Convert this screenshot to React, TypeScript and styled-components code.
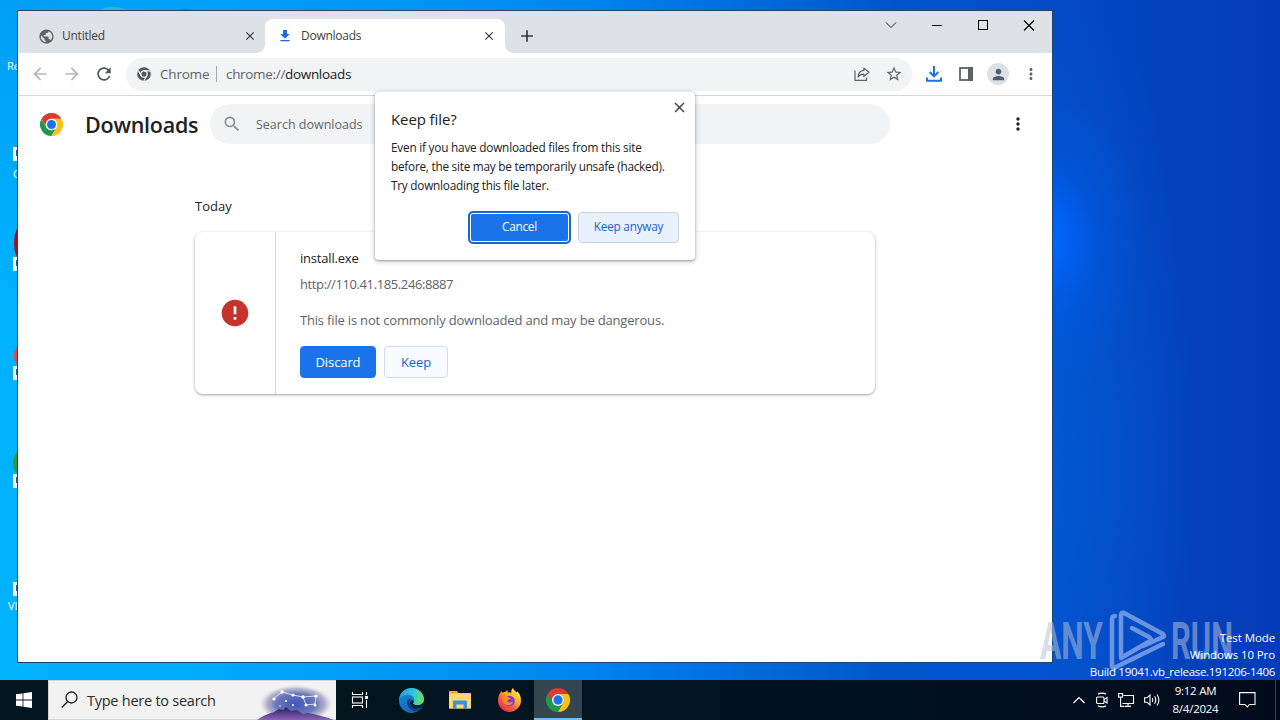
import styled, { createGlobalStyle } from "styled-components";

const GlobalStyle = createGlobalStyle`
  * {
    box-sizing: border-box;
  }
  body {
    margin: 0;
    overflow: hidden;
    font-family: "Open Sans", "Noto Sans", sans-serif;
  }
  button {
    font-family: inherit;
    padding: 0;
    border: none;
    background: none;
  }
  svg {
    display: block;
    flex: none;
    overflow: visible;
  }
`;

type IconProps = { d: string; size: number; color?: string };

const Icon = ({ d, size, color = "#5f6368" }: IconProps) => (
  <svg width={size} height={size} viewBox="0 0 24 24" fill={color}>
    <path d={d} />
  </svg>
);

const paths = {
  globe:
    "M12 2C6.48 2 2 6.48 2 12s4.48 10 10 10 10-4.48 10-10S17.52 2 12 2zm-1 17.93c-3.95-.49-7-3.85-7-7.93 0-.62.08-1.21.21-1.79L9 15v1c0 1.1.9 2 2 2v1.93zm6.9-2.54c-.26-.81-1-1.39-1.9-1.39h-1v-3c0-.55-.45-1-1-1H8v-2h2c.55 0 1-.45 1-1V7h2c1.1 0 2-.9 2-2v-.41c2.93 1.19 5 4.06 5 7.41 0 2.08-.8 3.97-2.1 5.39z",
  close:
    "M19 6.41L17.59 5 12 10.59 6.41 5 5 6.41 10.59 12 5 17.59 6.41 19 12 13.41 17.59 19 19 17.59 13.41 12z",
  download: "M19 9h-4V3H9v6H5l7 7 7-7zM5 18v2h14v-2H5z",
  add: "M19 13h-6v6h-2v-6H5v-2h6V5h2v6h6v2z",
  back: "M20 11H7.83l5.59-5.59L12 4l-8 8 8 8 1.41-1.41L7.83 13H20v-2z",
  forward: "M12 4l-1.41 1.41L16.17 11H4v2h12.17l-5.58 5.59L12 20l8-8z",
  reload:
    "M17.65 6.35A7.958 7.958 0 0 0 12 4c-4.42 0-7.99 3.58-7.99 8s3.57 8 7.99 8c3.73 0 6.84-2.55 7.73-6h-2.08A5.99 5.99 0 0 1 12 18c-3.31 0-6-2.69-6-6s2.69-6 6-6c1.66 0 3.14.69 4.22 1.78L13 11h7V4l-2.35 2.35z",
  star: "M22 9.24l-7.19-.62L12 2 9.19 8.63 2 9.24l5.46 4.73L5.82 21 12 17.27 18.18 21l-1.63-7.03L22 9.24zM12 15.4l-3.76 2.27 1-4.28-3.32-2.88 4.38-.38L12 6.1l1.71 4.04 4.38.38-3.32 2.88 1 4.28L12 15.4z",
  dots: "M12 8c1.1 0 2-.9 2-2s-.9-2-2-2-2 .9-2 2 .9 2 2 2zm0 2c-1.1 0-2 .9-2 2s.9 2 2 2 2-.9 2-2-.9-2-2-2zm0 6c-1.1 0-2 .9-2 2s.9 2 2 2 2-.9 2-2-.9-2-2-2z",
  person:
    "M12 12c2.21 0 4-1.79 4-4s-1.79-4-4-4-4 1.79-4 4 1.79 4 4 4zm0 2c-2.67 0-8 1.34-8 4v2h16v-2c0-2.66-5.33-4-8-4z",
  search:
    "M15.5 14h-.79l-.28-.27A6.471 6.471 0 0 0 16 9.5 6.5 6.5 0 1 0 9.5 16c1.61 0 3.09-.59 4.23-1.57l.27.28v.79l5 4.99L20.49 19l-4.99-5zm-6 0C7.01 14 5 11.99 5 9.5S7.01 5 9.5 5 14 7.01 14 9.5 11.99 14 9.5 14z",
  error:
    "M12 2C6.48 2 2 6.48 2 12s4.48 10 10 10 10-4.48 10-10S17.52 2 12 2zm1 15h-2v-2h2v2zm0-4h-2V7h2v6z",
};

const ChromeLogo = ({ size }: { size: number }) => (
  <svg width={size} height={size} viewBox="0 0 48 48">
    <path
      fill="#1e9a4c"
      d="M24 48A24 24 0 0 1 3.215 12L13.608 30A12 12 0 0 0 34.392 30L24 48z"
    />
    <path
      fill="#fbc116"
      d="M24 12H44.785A24 24 0 0 1 24 48L34.392 30A12 12 0 0 0 24 12z"
    />
    <path
      fill="#df3a2e"
      d="M13.608 30L3.215 12A24 24 0 0 1 44.785 12H24A12 12 0 0 0 13.608 30z"
    />
    <circle cx="24" cy="24" r="12" fill="#fff" />
    <circle cx="24" cy="24" r="9.3" fill="#1a73e8" />
  </svg>
);

const ChromeMono = () => (
  <svg width="14" height="14" viewBox="0 0 48 48">
    <circle cx="24" cy="24" r="23.500" fill="#55595e" />
    <circle cx="24" cy="24" r="11" fill="none" stroke="#f1f3f4" strokeWidth="4.5" />
    <path
      d="M24 13H45M14.5 30L4.5 12.500M33.500 30L23.500 47"
      stroke="#f1f3f4"
      strokeWidth="4"
    />
  </svg>
);

const ShareIcon = () => (
  <svg width="16" height="16" viewBox="0 0 16 16" fill="none" stroke="#5f6368" strokeWidth="1.2">
    <path d="M1 4.500V14.400H12.500V11.500" />
    <path
      d="M9.800 2L15 6.300L9.800 10.500V8.200C7 8.200 5.300 9 4 11C4.300 7.500 6.300 4.800 9.800 4.400V2z"
      strokeLinejoin="round"
    />
  </svg>
);

const TrayDownloadIcon = () => (
  <svg width="16" height="16" viewBox="0 0 16 16" fill="none" stroke="#1a73e8" strokeWidth="2">
    <path d="M8 0V10M3.700 6L8 10.300L12.300 6" />
    <path d="M1 11.500V14.800H15V11.500" />
  </svg>
);

const SidePanelIcon = () => (
  <svg width="14" height="14" viewBox="0 0 14 14">
    <rect x="1" y="1" width="12" height="12" fill="none" stroke="#5f6368" strokeWidth="1.8" />
    <rect x="9" y="0" width="5" height="14" fill="#5f6368" />
  </svg>
);

const WindowsLogo = () => (
  <svg width="16" height="16" viewBox="0 0 16 16" fill="#fff">
    <path d="M0 2.300L6.600 1.400V7.600H0zM7.400 1.300L16 0V7.600H7.400zM0 8.400H6.600V14.600L0 13.700zM7.400 8.400H16V16L7.400 14.800z" />
  </svg>
);

const SearchHighlight = () => (
  <svg width="80" height="39" viewBox="0 0 80 39">
    <defs>
      <radialGradient id="sky" cx="0.5" cy="0.55" r="0.5">
        <stop offset="0" stopColor="#3f58b8" />
        <stop offset="0.55" stopColor="#6a78b8" />
        <stop offset="0.8" stopColor="#a9a6c8" stopOpacity="0.8" />
        <stop offset="1" stopColor="#d8d4e2" stopOpacity="0" />
      </radialGradient>
      <linearGradient id="hill" x1="0" y1="0" x2="0" y2="1">
        <stop offset="0" stopColor="#2a1c5e" />
        <stop offset="1" stopColor="#8a63b8" />
      </linearGradient>
    </defs>
    <ellipse cx="40" cy="21" rx="37" ry="19" fill="url(#sky)" />
    <path d="M1 39C10 33 15 32 18 31L23 28L27 29L30 26L35 30L41 29L47 33L52 32C62 34 71 36 78 39z" fill="url(#hill)" />
    <path d="M17 18L26 11L37 14L47 16L60 15L59 23L50 24L47 16" fill="none" stroke="#dfe6ff" strokeWidth="0.9" />
    <g fill="#fff">
      <circle cx="18" cy="18" r="1.600" />
      <circle cx="26" cy="11" r="1.700" />
      <circle cx="37" cy="14" r="1.600" />
      <circle cx="47" cy="16" r="1.700" />
      <circle cx="60" cy="15" r="1.600" />
      <circle cx="59" cy="24" r="1.500" />
      <circle cx="50" cy="24" r="1.500" />
      <circle cx="30" cy="20" r="1" />
      <circle cx="37" cy="24" r="1" />
      <circle cx="24" cy="25" r="0.700" />
    </g>
  </svg>
);

const TaskViewIcon = () => (
  <svg width="18" height="16" viewBox="0 0 18 16" fill="none" stroke="#fff" strokeWidth="1.100">
    <path d="M1.500 0V2.500H11.500V0M1.500 16V13.500H11.500V16" />
    <rect x="1.500" y="5" width="10" height="6" />
    <path d="M15.500 0V3M15.500 8V16" />
    <rect x="14.500" y="4.500" width="2" height="2" fill="#fff" />
  </svg>
);

const EdgeIcon = () => (
  <svg width="25" height="25" viewBox="0 0 24 24">
    <defs>
      <linearGradient id="edgeTop" x1="0" y1="0.3" x2="1" y2="0.5">
        <stop offset="0" stopColor="#1f9be8" />
        <stop offset="0.55" stopColor="#35c4d6" />
        <stop offset="1" stopColor="#64df62" />
      </linearGradient>
      <linearGradient id="edgeLow" x1="0" y1="0" x2="0.6" y2="1">
        <stop offset="0" stopColor="#1b8ddb" />
        <stop offset="1" stopColor="#1463b8" />
      </linearGradient>
    </defs>
    <circle cx="12" cy="12" r="12" fill="url(#edgeLow)" />
    <path
      d="M0.100 11C0.700 4.800 5.800 0 12 0c7 0 12 5.300 12 10.500 0 3.700-2.900 6.100-6.200 6.100-2.800 0-4.300-1.100-4.300-1.900 0-.7 1.200-1.300 1.200-3C14.700 9 12 6.500 8.500 6.500 4 6.500 1 9 .1 11z"
      fill="url(#edgeTop)"
    />
    <path
      d="M11.500 10.500c-1.200.8-1.800 2.200-1.500 4 .6 3.200 4 5.300 7.500 5 2.400-.2 4.200-1.100 5.200-1.800-.4.900-.9 1.700-1.500 2.400-2.500 2.400-6 2.700-8.700 1.200C8 19 7 14 8.500 11.500c.8-1 2-1.300 3-1z"
      fill="#123f78"
    />
    <path d="M13.500 14.700c0 .8 1.500 1.900 4.300 1.900 2.400 0 4.700-1.200 5.600-3.200l.5 1.500-1.200 2.800c-1 .7-2.800 1.600-5.200 1.800-3.500.3-6.500-1.800-6.900-4.500-.2-1.600.5-3 1.700-3.500 1.700.2 2.400 1.700 1.200 3.200z" fill="#0a2136" />
  </svg>
);

const FolderIcon = () => (
  <svg width="22" height="18" viewBox="0 0 22 18">
    <path d="M0 0H8L9.500 2H22V17.500H0z" fill="#e9a93a" />
    <path d="M0 2.500H22V17.500H0z" fill="#fcd975" />
    <path d="M4 18V10.500Q4 9.500 5 9.500H17Q18 9.500 18 10.500V18H14.500V13.500H7.500V18z" fill="#3f93cf" />
  </svg>
);

const FirefoxIcon = () => (
  <svg width="23" height="24" viewBox="0 0 24 25">
    <defs>
      <linearGradient id="fox" x1="0.85" y1="0.1" x2="0.2" y2="0.95">
        <stop offset="0" stopColor="#fff04a" />
        <stop offset="0.35" stopColor="#ffb01f" />
        <stop offset="0.65" stopColor="#ff5a36" />
        <stop offset="1" stopColor="#f0207a" />
      </linearGradient>
    </defs>
    <path
      d="M2.500 5C3 4.200 3.500 3.500 4.200 3c0 1 .3 1.600.8 2 .8-.8 2-1.300 3.200-1.400C8.700 2.700 9.500 2.200 10.300 2c-.4.8-.5 1.600-.2 2.300L14 5c-.6-2 .2-4 1.800-5 .2 2 2 3 3.800 4.800.4-.3.500-.8.500-1.300C22.500 5.500 24 9 24 13c0 6.600-5.400 12-12 12S0 19.600 0 13c0-3.200 1-6 2.500-8z"
      fill="url(#fox)"
    />
    <circle cx="12" cy="13.500" r="5.500" fill="#7a3fd8" />
    <path d="M4 9c2-1 4.500-1 6 .5 1 .8 2.600.6 3.500 1-.5 1.500-2.500 1.500-3.500 2.300-.8.700-.3 2 1 2.200 1.800.3 3-.5 4.500.2-1.500 2.800-5 3.500-7.500 2-2.700-1.700-4-5-4-8.200z" fill="#ff8a2a" />
  </svg>
);

const MeetNowIcon = () => (
  <svg width="12" height="16" viewBox="0 0 12 16" fill="none" stroke="#fff" strokeWidth="1.100">
    <path d="M2 2.300C4 .7 8 .7 10 2.300M2 13.700C4 15.300 8 15.300 10 13.700" />
    <rect x="0.600" y="5" width="7.400" height="6.500" rx="1" />
    <path d="M8 7.500L11 5.500V11L8 9" />
  </svg>
);

const NetworkIcon = () => (
  <svg width="16" height="14" viewBox="0 0 16 14" fill="none" stroke="#fff" strokeWidth="1.100">
    <path d="M5.500 2.500H15.500V10.500H4.500M10 10.500V13M6.500 13.400H13" />
    <rect x="0.600" y="0.600" width="4" height="3.500" />
    <path d="M2.600 4V13.400H6" />
  </svg>
);

const SoundIcon = () => (
  <svg width="17" height="14" viewBox="0 0 17 14" fill="none" stroke="#fff" strokeWidth="1.100">
    <path d="M0.600 4.800H3L6 2V12L3 9.200H0.600z" />
    <path d="M8.300 5Q9.500 7 8.300 9M10.600 3.300Q13 7 10.600 10.700M13 1.500Q16.800 7 13 12.500" />
  </svg>
);

const Watermark = () => (
  <svg width="200" height="64" viewBox="0 0 200 64">
    <g
      fill="#b4bfdc"
      fillOpacity="0.55"
      fontFamily="Roboto, sans-serif"
      fontSize="52"
      fontWeight="700"
    >
      <text x="3" y="51" textLength="63" lengthAdjust="spacingAndGlyphs">
        ANY
      </text>
      <text x="134" y="51" textLength="62" lengthAdjust="spacingAndGlyphs">
        RUN
      </text>
    </g>
    <g
      fill="none"
      stroke="#86a8ea"
      strokeOpacity="0.8"
      strokeWidth="4.500"
      strokeLinejoin="round"
      strokeLinecap="round"
    >
      <path d="M78 8Q75 8 75 12V58Q75 61 79 59L126 36" />
      <path d="M106 38L126 29Q128 28 126 26L87 5Q84 4 84 7V50L113 33Q115 31 112 29L95 20" />
    </g>
  </svg>
);

const shortcuts = [
  { label: "Re", top: 59, left: 7 },
  { label: "C", top: 167, left: 13 },
  { label: "VL", top: 599, left: 8 },
];

const arrows = [147, 257, 366, 474, 582];

const App = () => (
  <>
    <GlobalStyle />
    <Screen>
      <Desktop>
        <Peek $left={94} $top={7} $width={38} $height={20} $color="#12c3d2" />
        <Peek $left={170} $top={9} $width={32} $height={20} $color="#2f7fb8" />
        <Peek $left={14} $top={226} $width={14} $height={34} $color="#a3131d" />
        <Peek $left={14} $top={342} $width={28} $height={28} $color="#e5484a" />
        <Peek $left={13} $top={446} $width={34} $height={34} $color="#2f9c38" />
        {arrows.map((top) => (
          <ShortcutArrow key={top} $top={top} />
        ))}
        {shortcuts.map((s) => (
          <ShortcutLabel key={s.label} $top={s.top} $left={s.left}>
            {s.label}
          </ShortcutLabel>
        ))}

        <BrowserWindow>
          <TabStrip>
            <InactiveTab>
              <Icon d={paths.globe} size={17} />
              <TabTitle>Untitled</TabTitle>
              <Icon d={paths.close} size={14} color="#35383c" />
            </InactiveTab>
            <ActiveTab>
              <Icon d={paths.download} size={16} color="#1a6be8" />
              <TabTitle>Downloads</TabTitle>
              <Icon d={paths.close} size={14} color="#35383c" />
            </ActiveTab>
            <NewTab>
              <Icon d={paths.add} size={20} color="#33363a" />
            </NewTab>
            <WindowControls>
              <svg width="12" height="12" viewBox="0 0 12 12" fill="none" stroke="#222">
                <path d="M1 3.500L6 8.500L11 3.500" />
              </svg>
              <svg width="11" height="11" viewBox="0 0 11 11" stroke="#000">
                <path d="M0 5.500H10" />
              </svg>
              <svg width="11" height="11" viewBox="0 0 11 11" fill="none" stroke="#000">
                <rect x="0.500" y="0.500" width="9" height="9" />
              </svg>
              <svg width="11" height="11" viewBox="0 0 11 11" stroke="#000" strokeWidth="1.100">
                <path d="M0 0.500L10 10.500M10 0.500L0 10.500" />
              </svg>
            </WindowControls>
          </TabStrip>

          <Toolbar>
            <NavButtons>
              <Icon d={paths.back} size={20} color="#b4b6b9" />
              <Icon d={paths.forward} size={20} color="#b4b6b9" />
              <Icon d={paths.reload} size={20} color="#505357" />
            </NavButtons>
            <Omnibox>
              <ChromeMono />
              <SiteName>Chrome</SiteName>
              <OmniDivider />
              <Url>
                chrome://<b>downloads</b>
              </Url>
              <ShareIcon />
              <Icon d={paths.star} size={18} />
            </Omnibox>
            <ToolbarActions>
              <TrayDownloadIcon />
              <SidePanelIcon />
              <Avatar>
                <Icon d={paths.person} size={17} color="#4e5b70" />
              </Avatar>
              <Icon d={paths.dots} size={18} />
            </ToolbarActions>
          </Toolbar>

          <PageHeader>
            <ChromeLogo size={23} />
            <PageTitle>Downloads</PageTitle>
            <SearchField>
              <Icon d={paths.search} size={20} color="#8b8e92" />
              <SearchHint>Search downloads</SearchHint>
            </SearchField>
            <Icon d={paths.dots} size={20} color="#202124" />
          </PageHeader>

          <DownloadList>
            <DateHeading>Today</DateHeading>
            <Card>
              <CardIcon>
                <Icon d={paths.error} size={32} color="#c5332a" />
              </CardIcon>
              <CardBody>
                <FileName>install.exe</FileName>
                <FileUrl>http://110.41.185.246:8887</FileUrl>
                <Warning>This file is not commonly downloaded and may be dangerous.</Warning>
                <CardActions>
                  <Button $primary $width={76}>
                    Discard
                  </Button>
                  <Button $width={64}>Keep</Button>
                </CardActions>
              </CardBody>
            </Card>
          </DownloadList>

          <Dialog>
            <DialogClose>
              <Icon d={paths.close} size={17} color="#3c3f43" />
            </DialogClose>
            <DialogTitle>Keep file?</DialogTitle>
            <DialogText>
              <Line $spacing={-0.22}>Even if you have downloaded files from this site</Line>
              <Line $spacing={-0.25}>before, the site may be temporarily unsafe (hacked).</Line>
              <Line $spacing={-0.24}>Try downloading this file later.</Line>
            </DialogText>
            <DialogActions>
              <DialogButton $primary>Cancel</DialogButton>
              <DialogButton>Keep anyway</DialogButton>
            </DialogActions>
          </Dialog>
        </BrowserWindow>

        <WatermarkBox>
          <Watermark />
        </WatermarkBox>
        <BuildInfo>
          <span>Test Mode</span>
          <span>Windows 10 Pro</span>
          <BuildNumber>Build 19041.vb_release.191206-1406</BuildNumber>
        </BuildInfo>
      </Desktop>

      <Taskbar>
        <TaskSlot>
          <WindowsLogo />
        </TaskSlot>
        <TaskSearch>
          <svg width="18" height="18" viewBox="0 0 18 18" fill="none" stroke="#1b1b1b" strokeWidth="1.300">
            <circle cx="10.500" cy="6.500" r="5.500" />
            <path d="M6.700 10.500L0.800 16.500" />
          </svg>
          <TaskSearchText>Type here to search</TaskSearchText>
          <SearchHighlight />
        </TaskSearch>
        <TaskSlot>
          <TaskViewIcon />
        </TaskSlot>
        <TaskApps>
          <TaskApp>
            <EdgeIcon />
          </TaskApp>
          <TaskApp>
            <FolderIcon />
          </TaskApp>
          <TaskApp>
            <FirefoxIcon />
          </TaskApp>
          <TaskApp $active>
            <ChromeLogo size={24} />
          </TaskApp>
        </TaskApps>
        <Tray>
          <svg width="12" height="8" viewBox="0 0 12 8" fill="none" stroke="#fff" strokeWidth="1.200">
            <path d="M0.500 7L6 1.500L11.500 7" />
          </svg>
          <MeetNowIcon />
          <NetworkIcon />
          <SoundIcon />
        </Tray>
        <Clock>
          <span>9:12 AM</span>
          <span>8/4/2024</span>
        </Clock>
        <Notifications>
          <svg width="17" height="16" viewBox="0 0 17 16" fill="none" stroke="#fff" strokeWidth="1.100">
            <path d="M0.600 0.600H16V12.500H10.500L8.300 15L6 12.500H0.600z" />
          </svg>
        </Notifications>
      </Taskbar>
    </Screen>
  </>
);

export default App;

const Screen = styled.div`
  width: 1280px;
  height: 720px;
  display: grid;
  grid-template-rows: 680px 40px;
`;

const Desktop = styled.div`
  position: relative;
  overflow: hidden;
  background:
    radial-gradient(
      ellipse 100px 150px at 1045px 242px,
      #0068ff 0,
      rgba(0, 100, 252, 0.85) 20%,
      rgba(0, 92, 235, 0.4) 50%,
      rgba(0, 84, 215, 0) 100%
    ),
    radial-gradient(ellipse 170px 520px at 1030px 460px, rgba(0, 98, 218, 0.75), rgba(0, 80, 205, 0) 100%),
    radial-gradient(ellipse 700px 300px at 0 0, rgba(0, 140, 235, 0.5), rgba(0, 140, 235, 0) 100%),
    linear-gradient(90deg, #00b2ff 0, #00acff 200px, #0088f0 560px, #0054cc 900px, #0448c4 1060px, #043cb6 1280px);
`;

const Peek = styled.div<{
  $left: number;
  $top: number;
  $width: number;
  $height: number;
  $color: string;
}>`
  position: absolute;
  left: ${(p) => p.$left}px;
  top: ${(p) => p.$top}px;
  width: ${(p) => p.$width}px;
  height: ${(p) => p.$height}px;
  border-radius: 50%;
  background: ${(p) => p.$color};
`;

const ShortcutArrow = styled.div<{ $top: number }>`
  position: absolute;
  left: 13px;
  top: ${(p) => p.$top}px;
  width: 12px;
  height: 14px;
  background: #fff;
  border: 3px solid #fff;

  &::after {
    content: "";
    display: block;
    width: 6px;
    height: 6px;
    background: #1a5f9e;
  }
`;

const ShortcutLabel = styled.span<{ $top: number; $left: number }>`
  position: absolute;
  left: ${(p) => p.$left}px;
  top: ${(p) => p.$top}px;
  color: #fff;
  font-size: 11px;
  line-height: 14px;
`;

const BuildInfo = styled.div`
  position: absolute;
  right: 5px;
  bottom: 0;
  display: flex;
  flex-direction: column;
  align-items: flex-end;
  color: #fff;
  font-size: 11.5px;
  line-height: 17px;
  letter-spacing: -0.1px;

  & > :first-child {
    line-height: 16px;
  }
`;

const BuildNumber = styled.span`
  letter-spacing: -0.3px;
`;

const WatermarkBox = styled.div`
  position: absolute;
  left: 1037px;
  top: 608px;
`;

const BrowserWindow = styled.div`
  position: absolute;
  left: 17px;
  top: 10px;
  width: 1036px;
  height: 653px;
  border: 1px solid #1f4468;
  background: #fff;
`;

const TabStrip = styled.div`
  display: flex;
  align-items: flex-end;
  height: 42px;
  background: #dee1e6;
`;

const InactiveTab = styled.div`
  display: flex;
  align-items: center;
  width: 247px;
  height: 34px;
  padding: 0 8px 0 20px;
`;

const ActiveTab = styled(InactiveTab)`
  position: relative;
  width: 240px;
  padding: 0 9px 0 12px;
  border-radius: 8px 8px 0 0;
  background: #fff;

  &::before,
  &::after {
    content: "";
    position: absolute;
    bottom: 0;
    width: 8px;
    height: 8px;
  }
  &::before {
    left: -8px;
    background: radial-gradient(circle at 0 0, transparent 7.5px, #fff 8px);
  }
  &::after {
    right: -8px;
    background: radial-gradient(circle at 100% 0, transparent 7.5px, #fff 8px);
  }
`;

const TabTitle = styled.span`
  flex: 1;
  padding: 0 0 2px 8px;
  font-size: 12px;
  letter-spacing: -0.25px;
  color: #3c3f43;

  ${InactiveTab}:first-child > & {
    padding-left: 7px;
  }
`;

const NewTab = styled.div`
  display: flex;
  align-items: center;
  height: 34px;
  padding-left: 12px;
`;

const WindowControls = styled.div`
  display: flex;
  align-items: center;
  align-self: flex-start;
  gap: 35px;
  height: 28px;
  margin-left: auto;
  padding-right: 17px;
`;

const Toolbar = styled.div`
  display: flex;
  align-items: center;
  height: 43px;
  border-bottom: 1px solid #d5d7da;
`;

const NavButtons = styled.div`
  display: flex;
  gap: 12px;
  padding-left: 12px;
`;

const Omnibox = styled.div`
  display: flex;
  align-items: center;
  width: 786px;
  height: 33px;
  margin-left: 12px;
  padding: 0 9px 0 11px;
  border-radius: 17px;
  background: #f1f3f4;
  font-size: 13.5px;
  color: #5f6368;
`;

const SiteName = styled.span`
  width: 56px;
  padding-left: 9px;
  letter-spacing: -0.2px;
  white-space: nowrap;
`;

const OmniDivider = styled.span`
  width: 1px;
  height: 16px;
  margin-left: 9px;
  background: #a5a8ac;
`;

const Url = styled.span`
  flex: 1;
  padding-left: 9px;
  letter-spacing: -0.32px;

  b {
    font-weight: 400;
    color: #202124;
  }

  & + svg {
    margin-right: 15px;
  }
`;

const ToolbarActions = styled.div`
  display: flex;
  align-items: center;
  gap: 17px;
  padding-left: 14px;

  & > :last-child {
    margin-left: -4px;
  }
`;

const Avatar = styled.div`
  display: flex;
  align-items: center;
  justify-content: center;
  width: 22px;
  height: 22px;
  margin-left: -3px;
  border-radius: 50%;
  background: #dde0e5;
`;

const PageHeader = styled.div`
  display: flex;
  align-items: center;
  height: 56px;
  padding: 0 24px 0 22px;

  & > :last-child {
    margin-left: auto;
  }
`;

const PageTitle = styled.h1`
  width: 147px;
  margin: 0;
  padding-left: 22px;
  font-size: 21.5px;
  font-weight: 600;
  letter-spacing: -0.25px;
  color: #202124;
`;

const SearchField = styled.div`
  display: flex;
  align-items: center;
  width: 680px;
  height: 40px;
  padding-left: 12px;
  border-radius: 20px;
  background: #f1f3f4;
`;

const SearchHint = styled.span`
  padding-left: 14px;
  font-size: 12.5px;
  color: #62666a;
`;

const DownloadList = styled.div`
  width: 680px;
  margin-left: 177px;
  padding-top: 44px;
`;

const DateHeading = styled.h2`
  margin: 0 0 16px;
  font-size: 13px;
  font-weight: 400;
  line-height: 20px;
  color: #202124;
`;

const Card = styled.div`
  display: flex;
  height: 162px;
  border-radius: 8px;
  background: #fff;
  box-shadow:
    0 1px 2px rgba(60, 64, 67, 0.3),
    0 1px 3px 1px rgba(60, 64, 67, 0.15);
`;

const CardIcon = styled.div`
  display: flex;
  align-items: center;
  justify-content: center;
  width: 81px;
  border-right: 1px solid #d5d7da;
`;

const CardBody = styled.div`
  display: flex;
  flex-direction: column;
  padding: 16px 24px;
  font-size: 13px;
  line-height: 20px;
  color: #5f6368;
`;

const FileName = styled.span`
  letter-spacing: -0.2px;
  color: #202124;
`;

const FileUrl = styled.span`
  margin-top: 6px;
  letter-spacing: -0.39px;
`;

const Warning = styled.span`
  margin-top: 16px;
  letter-spacing: -0.18px;
`;

const CardActions = styled.div`
  display: flex;
  gap: 8px;
  margin-top: 16px;
`;

const Button = styled.button<{ $primary?: boolean; $width: number }>`
  width: ${(p) => p.$width}px;
  height: 32px;
  border: 1px solid ${(p) => (p.$primary ? "#1a73e8" : "#d2dcf0")};
  border-radius: 4px;
  background: ${(p) => (p.$primary ? "#1a73e8" : "#f8fbff")};
  color: ${(p) => (p.$primary ? "#fff" : "#1a62c8")};
  font-size: 13px;
  letter-spacing: -0.1px;
`;

const Dialog = styled.div`
  position: absolute;
  left: 357px;
  top: 81px;
  width: 320px;
  height: 168px;
  padding: 15px 16px;
  border-radius: 4px;
  background: #fff;
  box-shadow:
    0 1px 2px rgba(60, 64, 67, 0.35),
    0 1px 4px 1px rgba(60, 64, 67, 0.25);
`;

const DialogClose = styled.div`
  position: absolute;
  right: 7px;
  top: 7px;
`;

const DialogTitle = styled.h2`
  margin: 0;
  font-size: 15px;
  font-weight: 400;
  line-height: 24px;
  letter-spacing: -0.1px;
  color: #202124;
`;

const DialogText = styled.div`
  display: flex;
  flex-direction: column;
  margin-top: 7px;
  font-size: 11.8px;
  line-height: 19px;
  color: #202124;
`;

const Line = styled.span<{ $spacing: number }>`
  letter-spacing: ${(p) => p.$spacing}px;
  white-space: nowrap;
`;

const DialogActions = styled.div`
  display: flex;
  justify-content: flex-end;
  gap: 8px;
  margin-top: 17px;
`;

const DialogButton = styled.button<{ $primary?: boolean }>`
  width: 101px;
  height: 31px;
  padding-bottom: 3px;
  border: 1px solid ${(p) => (p.$primary ? "#fff" : "#c6d3ea")};
  border-radius: 4px;
  background: ${(p) => (p.$primary ? "#1a73e8" : "#e9f1fd")};
  color: ${(p) => (p.$primary ? "#fff" : "#1a62c8")};
  font-size: 11.8px;
  letter-spacing: -0.25px;
  ${(p) =>
    p.$primary &&
    `
    outline: 2px solid #1b66c9;
    outline-offset: -1px;
    box-shadow: inset 0 0 0 1px #fff;
  `}
`;

const Taskbar = styled.div`
  display: flex;
  background: linear-gradient(90deg, #03161f, #02131f 60%, #020b1c);
`;

const TaskSlot = styled.div`
  display: flex;
  align-items: center;
  justify-content: center;
  width: 48px;
`;

const TaskSearch = styled.div`
  display: flex;
  align-items: center;
  width: 288px;
  height: 40px;
  padding-left: 12px;
  border: 1px solid #d5d5d5;
  border-right: none;
  background: #f2f2f2;
`;

const TaskSearchText = styled.span`
  flex: 1;
  padding: 1px 0 0 8px;
  font-size: 14.5px;
  letter-spacing: -0.25px;
  color: #2b2b2b;
`;

const TaskApps = styled.div`
  display: flex;
  gap: 1px;
  padding-left: 3px;
`;

const TaskApp = styled.div<{ $active?: boolean }>`
  display: flex;
  align-items: center;
  justify-content: center;
  width: 48px;
  height: 40px;
  ${(p) =>
    p.$active &&
    `
    background: #35454f;
    box-shadow: inset 0 -2px 0 #76b9ed;
  `}
`;

const Tray = styled.div`
  display: flex;
  align-items: center;
  gap: 10px;
  margin-left: auto;

  & > :first-child {
    margin-right: 1px;
  }
`;

const Clock = styled.div`
  display: flex;
  flex-direction: column;
  align-items: center;
  width: 69px;
  padding-top: 2px;
  color: #fff;
  font-size: 11.5px;
  line-height: 18px;
  letter-spacing: -0.25px;
`;

const Notifications = styled.div`
  display: flex;
  align-items: center;
  width: 46px;
  height: 40px;
  margin-right: 4px;
  padding-left: 9px;
  border-right: 1px solid #3b4350;
`;
